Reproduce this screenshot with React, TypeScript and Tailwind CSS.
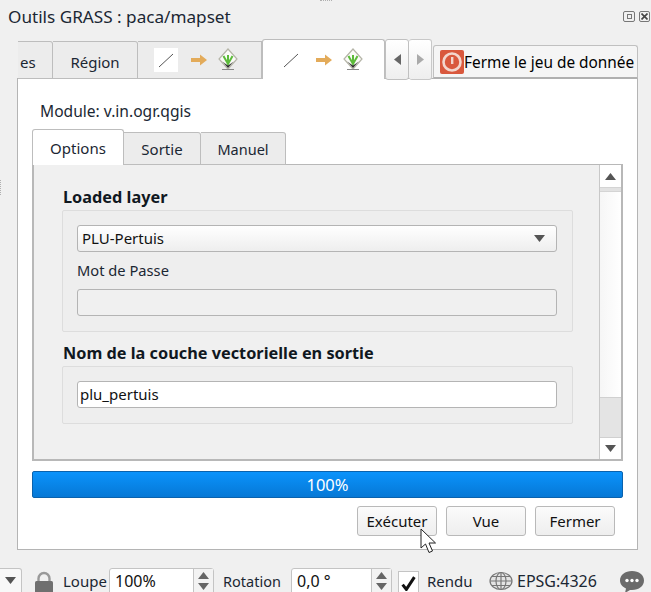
import React from 'react';

const Triangle = ({ dir, color = '#555' }: { dir: 'up' | 'down' | 'left' | 'right'; color?: string }) => {
  const pts = { up: '0,7 11,7 5.5,0', down: '0,0 11,0 5.5,7', left: '7,0 7,11 0,5.5', right: '0,0 0,11 7,5.5' }[dir];
  const size = dir === 'up' || dir === 'down' ? { w: 11, h: 7 } : { w: 7, h: 11 };
  return (
    <svg width={size.w} height={size.h} viewBox={`0 0 ${size.w} ${size.h}`} className="block">
      <polygon points={pts} fill={color} />
    </svg>
  );
};

const GrassIcon = () => (
  <svg width="20" height="24" viewBox="0 0 20 24" className="block">
    <polygon points="10,1 19,11 10,21 1,11" fill="#fbfbf8" stroke="#b5b5a8" strokeWidth="1.2" />
    <path d="M5.500 8 C7 11 8.500 13 10 16 C11.500 13 13 11 14.500 8 M10 16 V7" fill="none" stroke="#5cbb3a" strokeWidth="2" />
    <path d="M4.500 13.500 L10 20 L15.500 13.500 L13 15.500 L10 17.500 L7 15.500Z" fill="#2f2f2f" />
    <rect x="4" y="21" width="12" height="1" fill="#888" />
  </svg>
);

const LayerFlowIcons = ({ boxed }: { boxed: boolean }) => (
  <div className="flex items-center">
    <div className={`w-6 h-6 flex items-center justify-center ${boxed ? 'bg-white' : ''}`}>
      <svg width="18" height="18" viewBox="0 0 18 18" className="block">
        <line x1="2" y1="16" x2="16" y2="3" stroke="#555" strokeWidth="1" />
      </svg>
    </div>
    <svg width="17" height="12" viewBox="0 0 17 12" className="block ml-[13px]">
      <path d="M0 4 H9 V0.5 L16 6 L9 11.5 V8 H0Z" fill="#e3ab5a" />
    </svg>
    <div className="ml-[10px]">
      <GrassIcon />
    </div>
  </div>
);

const SpinBox = ({ value, width }: { value: string; width: string }) => (
  <div className={`${width} h-[30px] bg-white border border-[#c4c4c4] rounded-[3px] flex shrink-0`}>
    <span className="flex-1 pl-[5px] text-[16px] leading-[25px] text-[#111]">{value}</span>
    <div className="w-[20px] bg-[#f3f3f3] border-l border-[#c4c4c4] flex flex-col items-center pt-[3px] gap-[4px]">
      <Triangle dir="up" color="#666" />
      <Triangle dir="down" color="#666" />
    </div>
  </div>
);

const ActionButton = ({ label }: { label: string }) => (
  <button className="w-[80px] h-[30px] bg-gradient-to-b from-[#fbfbfb] to-[#eeeeee] border border-[#b9b9b9] rounded-[3px] text-[15px] text-[#111]">
    {label}
  </button>
);

export default function App() {
  return (
    <div
      className="relative w-[651px] h-[592px] overflow-hidden bg-[#f0f0f0] text-[#111] flex flex-col"
      style={{ fontFamily: '"Noto Sans", "Open Sans", sans-serif' }}
    >
      {/* Title */}
      <div className="h-[39px] flex justify-between pl-2 pr-[1px] shrink-0">
        <span className="text-[17.15px] leading-[34px] text-[#1b2733]">Outils GRASS : paca/mapset</span>
        <div className="flex gap-[4px] pt-[11px]">
          <div className="w-[12px] h-[11px] border border-[#777] rounded-[2px] flex items-center justify-center">
            <div className="w-[5px] h-[5px] border border-[#777]" />
          </div>
          <div className="w-[11px] h-[11px] border border-[#777] rounded-[2px] flex items-center justify-center">
            <svg width="7" height="7" viewBox="0 0 7 7" className="block">
              <path d="M0.500 0.500 L6.500 6.500 M6.500 0.500 L0.500 6.500" stroke="#444" strokeWidth="1.600" />
            </svg>
          </div>
        </div>
      </div>

      {/* Outer tab bar */}
      <div className="relative z-10 ml-[18px] h-[40px] -mb-[1px] flex items-end shrink-0">
        <div className="w-[35px] h-[38px] bg-[#ececec] border border-l-0 border-[#bdbdbd] rounded-tr-[3px] pl-[2px] text-[15px] leading-[40px] text-[#1b2733]">
          es
        </div>
        <div className="w-[85px] h-[38px] bg-[#ececec] border border-l-0 border-[#bdbdbd] rounded-tr-[3px] text-center text-[15px] leading-[40px] text-[#1b2733]">
          Région
        </div>
        <div className="w-[124px] h-[38px] bg-[#ececec] border border-l-0 border-[#bdbdbd] pl-[16px] flex items-center">
          <LayerFlowIcons boxed />
        </div>
        <div className="w-[123px] h-[40px] bg-white border border-b-0 border-[#bdbdbd] rounded-t-[3px] pl-[16px] flex items-center">
          <LayerFlowIcons boxed={false} />
        </div>
        <div className="self-start w-[24px] h-[41px] bg-gradient-to-b from-white to-[#eeeeee] border border-[#c0c0c0] rounded-[3px] flex items-center justify-center">
          <Triangle dir="left" color="#666" />
        </div>
        <div className="self-start w-[23px] h-[41px] bg-gradient-to-b from-white to-[#eeeeee] border border-l-0 border-[#c8c8c8] rounded-[3px] flex items-center justify-center">
          <Triangle dir="right" color="#aaa" />
        </div>
        <div className="ml-[1px] w-[205px] h-[34px] bg-[#f5f5f5] border border-[#c0c0c0] border-b-[2px] border-b-[#b0b0b0] rounded-t-[3px] flex items-center pl-[6px]">
          <svg width="24" height="24" viewBox="0 0 24 24" className="block shrink-0">
            <rect width="24" height="24" rx="2" fill="#d9583d" />
            <circle cx="12" cy="12" r="8.5" fill="none" stroke="#f3d6cd" strokeWidth="2.6" />
            <rect x="11" y="7" width="2.4" height="7" fill="#f3d6cd" />
          </svg>
          <span className="pt-[3px] text-[15.4px] leading-none whitespace-nowrap text-black">Ferme le jeu de donnée</span>
        </div>
      </div>

      {/* Main panel */}
      <div className="ml-[17px] w-[621px] h-[472px] bg-white border border-[#b4b4b4] flex flex-col pl-[14px] shrink-0">
        <div className="pl-[8px] pt-[21px] h-[50px] text-[15.6px] leading-[22px] text-[#1b2733]">Module: v.in.ogr.qgis</div>

        {/* Inner tabs */}
        <div className="relative z-10 h-[36px] -mb-[1px] flex items-end">
          <div className="w-[92px] h-[36px] bg-white border border-b-0 border-[#bdbdbd] rounded-t-[3px] text-center text-[15px] leading-[37px] text-[#1b2733]">
            Options
          </div>
          <div className="w-[77px] h-[33px] bg-[#ececec] border border-l-0 border-[#bdbdbd] rounded-tr-[3px] text-center text-[15px] leading-[33px] text-[#1b2733]">
            Sortie
          </div>
          <div className="w-[85px] h-[33px] bg-[#ececec] border border-l-0 border-[#bdbdbd] rounded-tr-[3px] text-center text-[14.5px] leading-[33px] text-[#1b2733]">
            Manuel
          </div>
        </div>

        {/* Scroll area */}
        <div className="w-[591px] h-[297px] border-l-2 border-t border-r-2 border-b-2 border-[#b8b8b8] bg-[#f0f0f0] flex shrink-0">
          <div className="flex-1 pl-[27px] pt-[20px]">
            <div className="pl-[2px] text-[16.3px] leading-[24px] font-bold text-[#10181f]">Loaded layer</div>
            <div className="mt-[1px] ml-[1px] w-[511px] h-[122px] bg-[#eeeeee] border border-[#dddddd] rounded-[2px] pl-[14px] pr-[15px] pt-[14px]">
              <div className="h-[27px] bg-gradient-to-b from-white to-[#eeeeee] border border-[#b4b4b4] rounded-[3px] flex items-center justify-between pl-[4px] pr-[11px]">
                <span className="text-[15px]">PLU-Pertuis</span>
                <Triangle dir="down" color="#555" />
              </div>
              <div className="h-[37px] text-[14.7px] leading-[37px] text-[#1b2733]">Mot de Passe</div>
              <div className="h-[27px] bg-[#f0f0f0] border border-[#b4b4b4] rounded-[3px]" />
            </div>
            <div className="pl-[2px] mt-[8px] h-[26px] text-[16.3px] leading-[26px] font-bold text-[#10181f] whitespace-nowrap">
              Nom de la couche vectorielle en sortie
            </div>
            <div className="ml-[1px] w-[511px] h-[58px] bg-[#eeeeee] border border-[#dddddd] rounded-[2px] pl-[14px] pr-[15px] pt-[14px]">
              <div className="h-[27px] bg-white border border-[#b4b4b4] rounded-[3px] pl-[2px] text-[15px] leading-[25px]">
                plu_pertuis
              </div>
            </div>
          </div>
          {/* Scrollbar */}
          <div className="w-[22px] border-l border-[#c8c8c8] flex flex-col">
            <div className="h-[22px] bg-white flex items-center justify-center">
              <Triangle dir="up" color="#555" />
            </div>
            <div className="h-[5px] bg-[#e2e2e2] border-y border-[#d4d4d4]" />
            <div className="flex-1 bg-gradient-to-r from-[#f6f6f6] to-white" />
            <div className="h-[41px] bg-[#e4e4e4] border-y border-[#d0d0d0]" />
            <div className="h-[21px] bg-white flex items-center justify-center">
              <Triangle dir="down" color="#555" />
            </div>
          </div>
        </div>

        {/* Progress */}
        <div className="mt-[10px] w-[591px] h-[27px] rounded-[2px] border border-[#0a62ad] bg-gradient-to-b from-[#0b93fb] to-[#0678d6] text-center text-white text-[16.5px] leading-[25px]">
          100%
        </div>

        {/* Buttons */}
        <div className="mt-[8px] flex gap-[9px] pl-[325px]">
          <ActionButton label="Exécuter" />
          <ActionButton label="Vue" />
          <ActionButton label="Fermer" />
        </div>
      </div>

      {/* Status bar */}
      <div className="mt-[18px] h-[30px] flex shrink-0 text-[15px] text-[#1b2733]">
        <div className="w-[22px] h-[30px] bg-[#f8f8f8] border border-l-0 border-[#c4c4c4] rounded-r-[3px] flex justify-center pt-[8px] shrink-0">
          <Triangle dir="down" color="#555" />
        </div>
        <svg width="18" height="24" viewBox="0 0 18 24" className="block ml-[13px] mt-[3px] shrink-0">
          <path d="M3.5 11 V7.5 a5.5 5.5 0 0 1 11 0 V11" fill="none" stroke="#999" strokeWidth="2.4" />
          <rect x="0" y="10" width="18" height="14" rx="1.5" fill="#6f6f6f" />
        </svg>
        <span className="ml-[10px] w-[46px] leading-[27px] shrink-0">Loupe</span>
        <SpinBox value="100%" width="w-[105px]" />
        <span className="ml-[9px] w-[68px] text-[14.5px] leading-[27px] shrink-0">Rotation</span>
        <SpinBox value="0,0 °" width="w-[101px]" />
        <div className="ml-[6px] w-[21px] h-[24px] bg-white border border-[#c4c4c4] flex items-center justify-center shrink-0 mt-[3px]">
          <svg width="15" height="15" viewBox="0 0 14 14" className="block">
            <path d="M1.5 8 L5 12.5 L12.5 1" fill="none" stroke="#111" strokeWidth="2.8" />
          </svg>
        </div>
        <span className="ml-[8px] w-[62px] leading-[27px] shrink-0">Rendu</span>
        <svg width="24" height="20" viewBox="0 0 24 20" className="block mt-[3px] shrink-0" fill="none" stroke="#777" strokeWidth="1.2">
          <ellipse cx="12" cy="10" rx="11" ry="8.5" fill="#e4e4e4" />
          <ellipse cx="12" cy="10" rx="5" ry="8.5" />
          <path d="M1 10 H23 M3 5.5 H21 M3 14.5 H21 M12 1.5 V18.5" />
        </svg>
        <span className="ml-[4px] w-[103px] text-[16px] leading-[27px] shrink-0">EPSG:4326</span>
        <svg width="24" height="22" viewBox="0 0 24 22" className="block mt-[3px] shrink-0">
          <path d="M12 0 C19 0 24 4 24 9.5 C24 15 19 19 12 19 L10 19 L5 22 L6 17.5 C2.500 16 0 13 0 9.500 C0 4 5 0 12 0Z" fill="#6b6b6b" />
          <circle cx="7" cy="9.500" r="1.700" fill="#fff" />
          <circle cx="12" cy="9.500" r="1.700" fill="#fff" />
          <circle cx="17" cy="9.500" r="1.700" fill="#fff" />
        </svg>
      </div>

      {/* Mouse pointer over the Exécuter button */}
      <svg width="20" height="28" viewBox="0 0 20 28" className="absolute left-[420px] top-[528px] z-20">
        <path d="M1 1 V20 L5.500 16 L9 24.500 L12.500 23 L9 15 L15.500 15 Z" fill="#fff" stroke="#222" strokeWidth="1" />
      </svg>

      {/* Dock grips */}
      <div className="absolute left-[320px] top-0 w-[12px] h-[1px] border-t border-dotted border-[#b0b0b0]" />
      <div className="absolute left-0 top-[180px] w-[1px] h-[15px] border-l border-dotted border-[#b0b0b0]" />
    </div>
  );
}
